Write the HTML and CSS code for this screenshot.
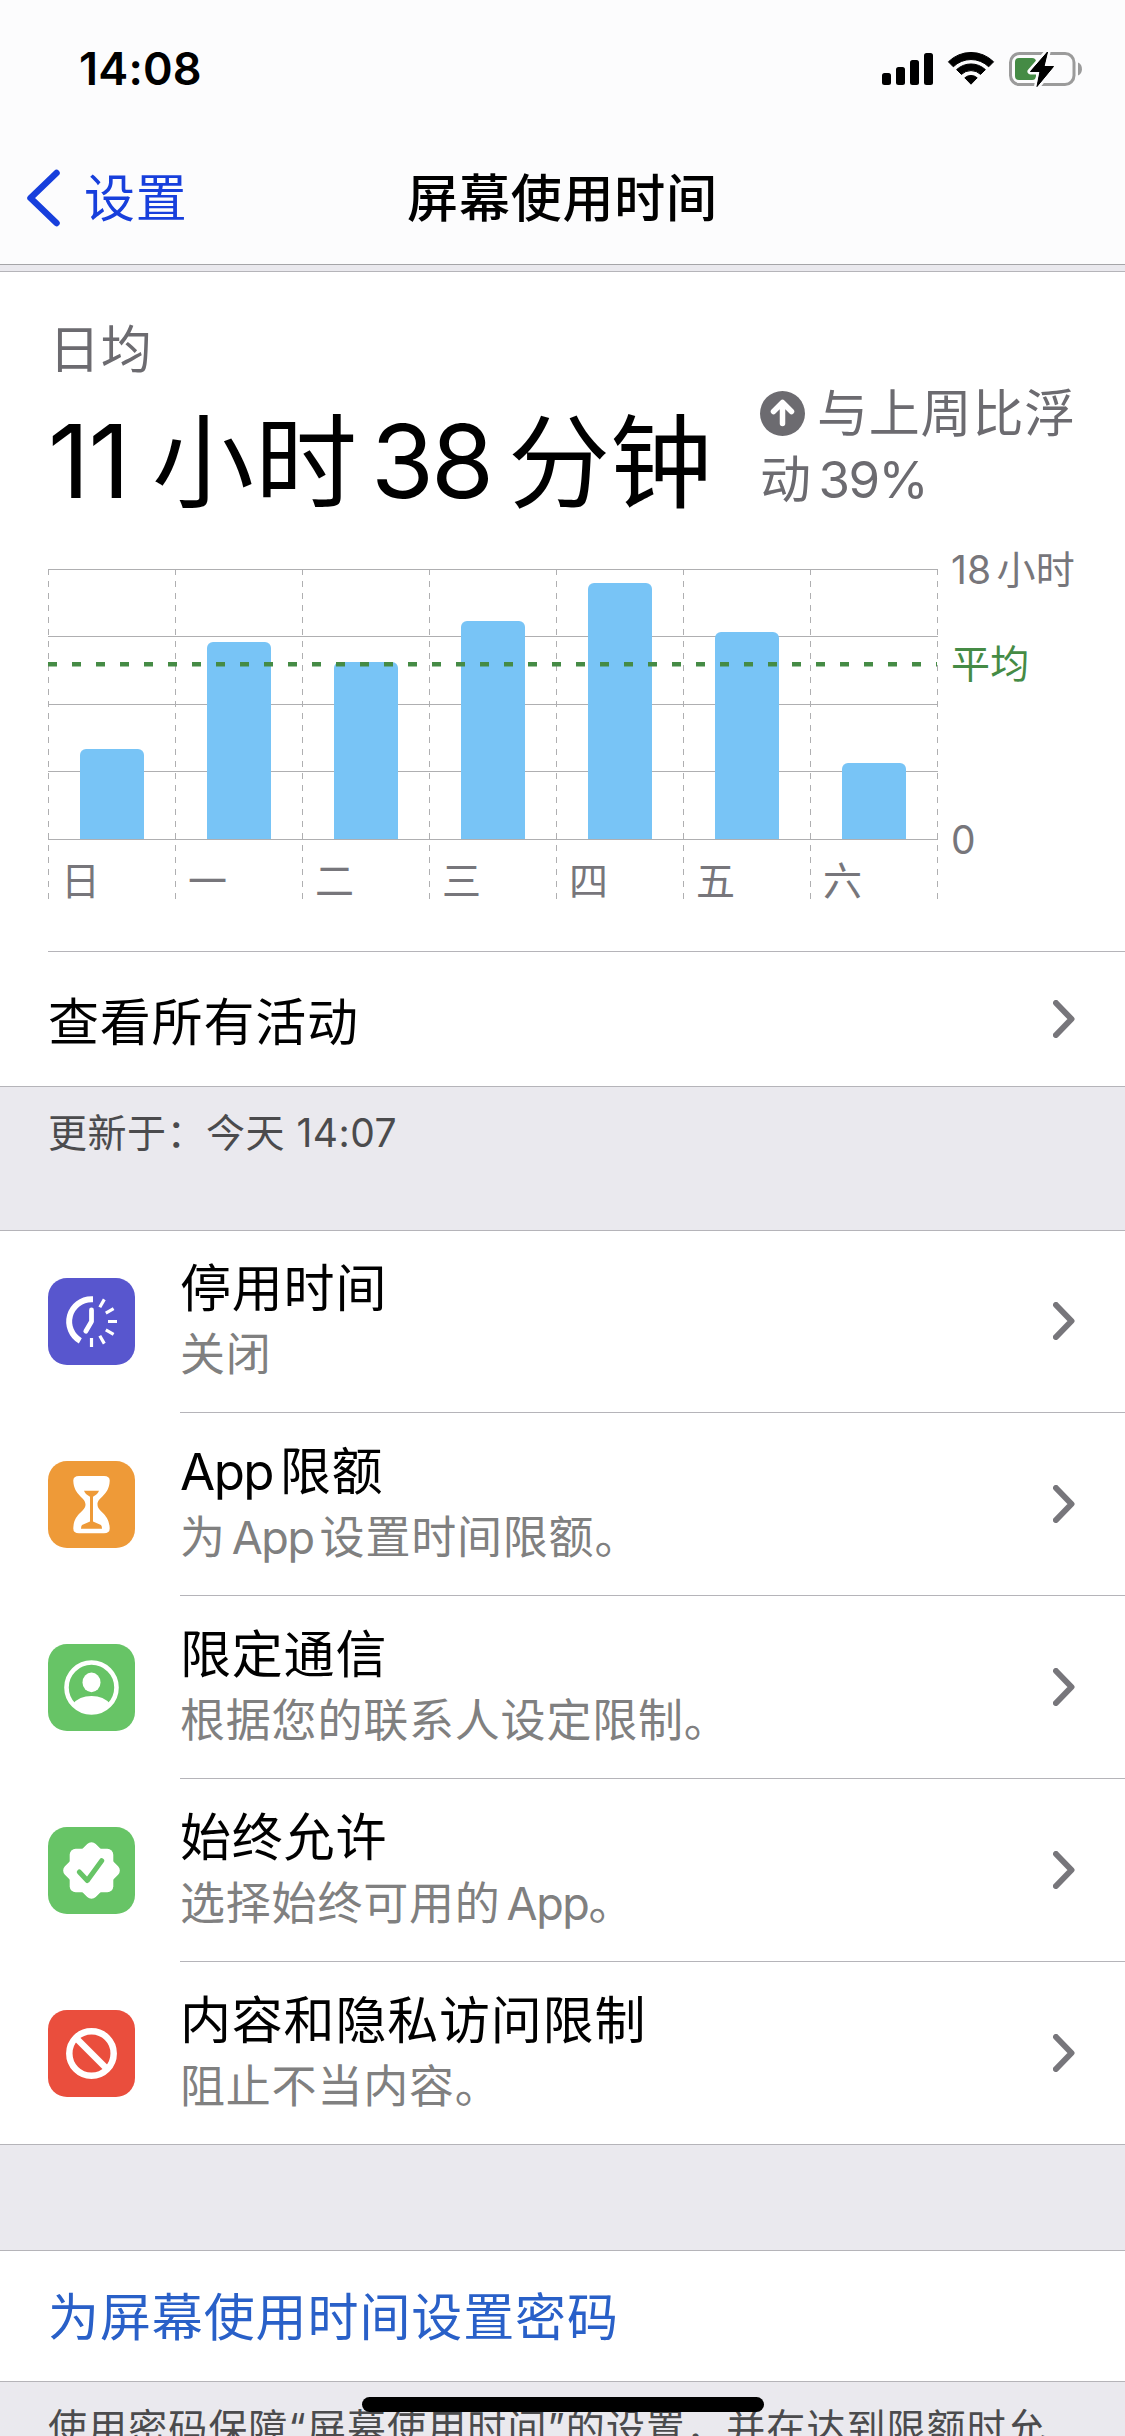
FILE: index.html
```html
<!DOCTYPE html>
<html lang="zh-CN">
<head>
<meta charset="utf-8">
<title>屏幕使用时间</title>
<link rel="stylesheet" href="styles.css">
</head>
<body>
<div class="screen">
  <header class="top">
    <div class="status">
      <span class="clock">14:08</span>
      <svg class="status-icons" viewBox="880 48 206 42" width="206" height="42">
        <rect x="882" y="73" width="9" height="12" rx="2.5"/>
        <rect x="896" y="67" width="9" height="18" rx="2.5"/>
        <rect x="910" y="60" width="9" height="25" rx="2.5"/>
        <rect x="924" y="53" width="9" height="32" rx="2.5"/>
        <path d="M948.4 61.8A32 32 0 0 1 993.6 61.8L988.7 66.8A25.2 25.2 0 0 0 953.3 66.8Z" stroke="#000" stroke-width="1" stroke-linejoin="round"/>
        <path d="M956.6 69.6A21.2 21.2 0 0 1 985.4 69.6L980.6 74.4A14 14 0 0 0 961.4 74.4Z" stroke="#000" stroke-width="1" stroke-linejoin="round"/>
        <path d="M964.8 77.8A9.4 9.4 0 0 1 977.2 77.8L971 84.2Z" stroke="#000" stroke-width="1" stroke-linejoin="round"/>
        <rect x="1010.5" y="53.5" width="63.5" height="31" rx="9" fill="none" stroke="#9b9b9b" stroke-width="3"/>
        <rect x="1015" y="58" width="21" height="22" rx="4" fill="#458b45"/>
        <path d="M1078 62.5c5.300 2 5.300 11 0 13z" fill="#9b9b9b"/>
        <path d="M1047.500 52L1030.500 71.500H1040L1037 86.500L1053.500 66.500H1044Z" fill="#000" stroke="#fcfcfd" stroke-width="6" stroke-linejoin="round" paint-order="stroke"/>
        <path d="M1047.500 52L1030.500 71.500H1040L1037 86.500L1053.500 66.500H1044Z" stroke="#000" stroke-width="1" stroke-linejoin="round"/>
      </svg>
    </div>
    <nav class="nav">
      <a class="back">
        <svg viewBox="0 0 34 58" width="34" height="58"><path d="M30.500 4L4.500 29L30.500 54" fill="none" stroke="#173fdc" stroke-width="6.500" stroke-linecap="round" stroke-linejoin="round"/></svg>
        <span>设置</span>
      </a>
      <h1>屏幕使用时间</h1>
    </nav>
  </header>

  <section class="group usage">
    <div class="avg-label">日均</div>
    <div class="summary">
      <div class="total"><span class="hours">11</span><em>小时</em><span class="minutes">38</span><em>分钟</em></div>
      <div class="trend"><svg viewBox="0 0 45 45" width="45" height="45"><circle cx="22.500" cy="22.500" r="22.500" fill="#6c6b70"/><path d="M22.500 32.500V12.500M13.500 20.500L22.500 11.500L31.500 20.500" fill="none" stroke="#fff" stroke-width="5.500" stroke-linecap="round" stroke-linejoin="round"/></svg><span class="up">与上周比浮</span><br>动<i></i><span class="latin">39%</span></div>
    </div>
    <div class="chart">
      <div class="plot">
        <div class="day"><div class="slot"><b style="height:90px"></b></div><span>日</span></div>
        <div class="day"><div class="slot"><b style="height:197px"></b></div><span>一</span></div>
        <div class="day"><div class="slot"><b style="height:177px"></b></div><span>二</span></div>
        <div class="day"><div class="slot"><b style="height:218px"></b></div><span>三</span></div>
        <div class="day"><div class="slot"><b style="height:256px"></b></div><span>四</span></div>
        <div class="day"><div class="slot"><b style="height:207px"></b></div><span>五</span></div>
        <div class="day"><div class="slot"><b style="height:76px"></b></div><span>六</span></div>
        <div class="mean"></div>
      </div>
      <div class="axis"><span class="max">18<i></i>小时</span><span class="avg">平均</span><span class="zero">0</span></div>
    </div>
    <div class="activity"><span>查看所有活动</span>
      <svg class="chev" viewBox="0 0 22 38" width="22" height="38"><path d="M3 3L18.500 19L3 35"/></svg>
    </div>
  </section>

  <p class="note">更新于：<span class="today">今天 14:07</span></p>

  <section class="group list">
    <div class="row">
      <svg class="tile indigo" viewBox="0 0 87 87">
        <g fill="none" stroke="#fff">
          <path d="M45 21.200H43.500A22.300 22.300 0 0 0 32.300 62.800" stroke-width="6"/>
          <path d="M43.500 32V43.500L37.800 53.300" stroke-width="4.800" stroke-linecap="round" stroke-linejoin="round"/>
          <path stroke-width="3.200" d="M60 43.500H69M57.800 35.200L65.600 30.700M51.800 29.200L56.300 21.400M57.800 51.800L65.600 56.300M51.800 57.800L56.300 65.600M43.500 60V69"/>
        </g>
      </svg>
      <div class="body"><div class="text"><div class="title">停用时间</div><div class="sub">关闭</div></div><svg class="chev" viewBox="0 0 22 38" width="22" height="38"><path d="M3 3L18.500 19L3 35"/></svg></div>
    </div>
    <div class="row">
      <svg class="tile orange" viewBox="0 0 87 87">
        <path fill="#fff" d="M31 15H56Q62 15 61.700 20C61 35 49.500 36 49.500 43.500C49.500 51 61 52 61.700 67Q62 72.300 56 72.300H31Q25 72.300 25.300 67C26 52 37.500 51 37.500 43.500C37.500 36 26 35 25.300 20Q25 15 31 15Z"/>
        <path fill="#ee9a38" d="M36 29.700H51Q50 33 45 35.700V60.500L53 64Q54 65 54 67.700H33Q33 65 34 64L42 60.500V35.700Q37 33 36 29.700Z"/>
      </svg>
      <div class="body"><div class="text"><div class="title"><span class="latin">App</span><i></i>限额</div><div class="sub">为<i></i><span class="latin">App</span><i></i>设置时间限额。</div></div><svg class="chev" viewBox="0 0 22 38" width="22" height="38"><path d="M3 3L18.500 19L3 35"/></svg></div>
    </div>
    <div class="row">
      <svg class="tile green" viewBox="0 0 87 87">
        <clipPath id="face"><circle cx="43.500" cy="43.500" r="26"/></clipPath>
        <circle cx="43.500" cy="43.500" r="25" fill="none" stroke="#fff" stroke-width="4.600"/>
        <ellipse cx="43.500" cy="38.400" rx="9" ry="9.800" fill="#fff"/>
        <path clip-path="url(#face)" fill="#fff" d="M25 60Q31 52 43.500 52T62 60V75H25Z"/>
      </svg>
      <div class="body"><div class="text"><div class="title">限定通信</div><div class="sub">根据您的联系人设定限制。</div></div><svg class="chev" viewBox="0 0 22 38" width="22" height="38"><path d="M3 3L18.500 19L3 35"/></svg></div>
    </div>
    <div class="row">
      <svg class="tile green" viewBox="0 0 87 87">
        <g fill="#fff"><rect x="21.700" y="21.700" width="43.600" height="43.600" rx="6"/><rect x="21.700" y="21.700" width="43.600" height="43.600" rx="6" transform="rotate(45 43.500 43.500)"/></g>
        <path d="M31.300 45L39.300 53.500L53.700 33.700" fill="none" stroke="#67c466" stroke-width="5" stroke-linecap="round" stroke-linejoin="round"/>
      </svg>
      <div class="body"><div class="text"><div class="title">始终允许</div><div class="sub">选择始终可用的<i></i><span class="latin">App</span>。</div></div><svg class="chev" viewBox="0 0 22 38" width="22" height="38"><path d="M3 3L18.500 19L3 35"/></svg></div>
    </div>
    <div class="row">
      <svg class="tile red" viewBox="0 0 87 87">
        <g fill="none" stroke="#fff" stroke-width="6.500"><circle cx="43.500" cy="43.500" r="22.200"/><path d="M28 28L59 59"/></g>
      </svg>
      <div class="body"><div class="text"><div class="title">内容和隐私访问限制</div><div class="sub">阻止不当内容。</div></div><svg class="chev" viewBox="0 0 22 38" width="22" height="38"><path d="M3 3L18.500 19L3 35"/></svg></div>
    </div>
  </section>

  <section class="group passcode"><a>为屏幕使用时间设置密码</a></section>
  <p class="note foot">使用密码保障<span class="q">“</span>屏幕使用时间<span class="q">”</span>的设置，并在达到限额时允</p>
  <div class="home"></div>
</div>
</body>
</html>
```
FILE: styles.css
```css
* { box-sizing: border-box; margin: 0; padding: 0; }

body {
  width: 1125px;
  height: 2436px;
  overflow: hidden;
  background: #eae9ee;
  color: #000;
  font-family: Inter, "Noto Sans CJK SC", sans-serif;
  font-size: 51px;
  letter-spacing: 0.8px;
  line-height: 66px;
}

.screen { position: relative; height: 2436px; overflow: hidden; }

/* thin gap between Latin and Han runs */
i { display: inline-block; width: 0.13em; }
.latin { letter-spacing: -0.03em; }

.top { height: 265px; background: #fcfcfd; border-bottom: 1px solid #a5a5a8; }

.status {
  display: flex;
  justify-content: space-between;
  align-items: center;
  height: 138px;
  padding: 0 39px 0 79px;
}
.clock { font-size: 45px; font-weight: 600; letter-spacing: 0.2px; }

.nav {
  display: grid;
  grid-template-columns: 380px 1fr 380px;
  align-items: center;
  height: 120px;
}
.back { display: flex; align-items: center; gap: 24px; padding-left: 26px; color: #173fdc; }
.back span, h1 { padding-top: 2px; }
h1 { font-size: 51px; font-weight: 500; text-align: center; white-space: nowrap; }

.group { background: #fff; border-top: 1px solid #b5b4b9; border-bottom: 1px solid #b5b4b9; }

.usage { margin-top: 6px; height: 816px; padding-top: 45px; }
.avg-label { padding-left: 49px; color: #6c6b70; }

.summary { display: flex; align-items: flex-start; height: 186px; padding: 0 48px; }
.total {
  display: flex;
  width: 712px;
  padding-top: 12px;
  font-size: 102px;
  line-height: 132px;
  white-space: nowrap;
}
.total .hours { width: 104px; letter-spacing: -1px; }
.total .minutes { width: 130px; margin-left: 13px; letter-spacing: -3px; }
.total em { font-style: normal; padding-top: 2px; letter-spacing: 1px; }
.total .minutes + em { margin-left: 7px; letter-spacing: 0; }
.trend { margin-top: -2px; color: #6c6b70; white-space: nowrap; }
.trend svg { vertical-align: -4px; }
.up { margin-left: 12px; }

.chart { display: flex; height: 382px; padding-left: 48px; }
.plot {
  position: relative;
  display: grid;
  grid-template-columns: repeat(7, 127px);
  grid-template-rows: 330px;
  width: 890px;
  height: 330px;
  background:
    linear-gradient(#afafb1, #afafb1) 0 0 / 100% 1px no-repeat,
    linear-gradient(#afafb1, #afafb1) 0 67px / 100% 1px no-repeat,
    linear-gradient(#afafb1, #afafb1) 0 135px / 100% 1px no-repeat,
    linear-gradient(#afafb1, #afafb1) 0 202px / 100% 1px no-repeat,
    linear-gradient(#afafb1, #afafb1) 0 270px / 100% 1px no-repeat,
    repeating-linear-gradient(#afafb1 0 6px, transparent 6px 12px) 889px 0 / 1px 100% no-repeat;
}
.day { background: repeating-linear-gradient(#afafb1 0 6px, transparent 6px 12px) 0 0 / 1px 100% no-repeat; }
.slot { display: flex; align-items: flex-end; height: 270px; padding-left: 32px; }
.slot b { width: 64px; border-radius: 6px 6px 0 0; background: #78c4f6; }
.day span { display: block; padding: 17px 0 0 13px; font-size: 39px; line-height: 50px; color: #77767b; }
.mean {
  position: absolute;
  left: 0;
  top: 93px;
  width: 889px;
  height: 5px;
  background: repeating-linear-gradient(to right, #458b45 0 9px, transparent 9px 24px);
  mask-image: linear-gradient(#000 80%, rgba(0, 0, 0, 0.5) 80%);
}
.axis {
  display: flex;
  flex-direction: column;
  margin: -24px 0 0 13px;
  font-size: 39px;
  line-height: 50px;
  color: #77767b;
  white-space: nowrap;
  letter-spacing: 0.2px;
}
.axis .avg { margin-top: 44px; color: #458b45; }
.axis .zero { margin-top: 126px; }

.activity {
  display: flex;
  justify-content: space-between;
  align-items: center;
  height: 135px;
  margin-left: 48px;
  padding-right: 50px;
  border-top: 1px solid #b5b4b9;
}
.activity span { padding-top: 7px; }

.chev path { fill: none; stroke: #77767b; stroke-width: 6; stroke-linecap: round; stroke-linejoin: round; }

.note {
  height: 143px;
  padding: 21px 0 0 48px;
  font-size: 39px;
  line-height: 50px;
  letter-spacing: 0.5px;
  color: #4b4b4d;
  white-space: nowrap;
}

.row { display: flex; align-items: center; height: 183px; padding-left: 48px; }
.row:first-child, .row:last-child { height: 182px; }
.row:first-child .tile, .row:first-child .chev { margin-bottom: 1px; }
.tile { width: 87px; height: 87px; border-radius: 19px; flex: none; }
.indigo { background: #5856ce; }
.orange { background: #ee9a38; }
.green { background: #67c466; }
.red { background: #ea4e3d; }

.body {
  display: flex;
  flex: 1;
  justify-content: space-between;
  align-items: center;
  height: 100%;
  margin-left: 45px;
  padding-right: 50px;
  border-bottom: 1px solid #b5b4b9;
}
.row:last-child .body { border-bottom: 0; }
.text { padding-top: 2px; white-space: nowrap; }
.row:first-child .text { padding-top: 0; }
.sub { font-size: 45px; color: #808080; }

.passcode { height: 132px; margin-top: 105px; padding: 34px 0 0 48px; letter-spacing: 0.9px; color: #2960c8; }
.foot { height: auto; letter-spacing: 1.1px; }
.q { font-family: Inter, sans-serif; }

.home { position: absolute; left: 362px; top: 2397px; width: 402px; height: 15px; border-radius: 8px; background: #000; }
```
